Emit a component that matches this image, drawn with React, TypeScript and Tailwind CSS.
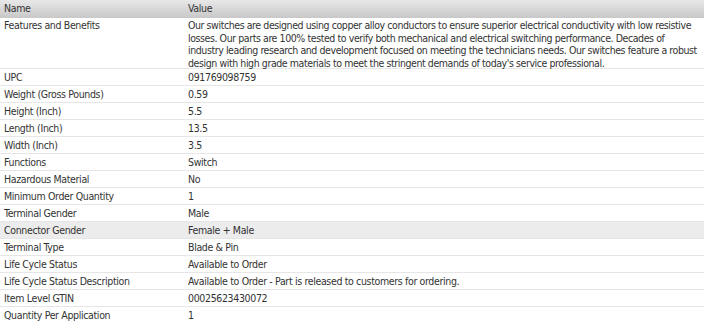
import React from "react";

const rows: [string, string][] = [
  ["UPC", "091769098759"],
  ["Weight (Gross Pounds)", "0.59"],
  ["Height (Inch)", "5.5"],
  ["Length (Inch)", "13.5"],
  ["Width (Inch)", "3.5"],
  ["Functions", "Switch"],
  ["Hazardous Material", "No"],
  ["Minimum Order Quantity", "1"],
  ["Terminal Gender", "Male"],
  ["Connector Gender", "Female + Male"],
  ["Terminal Type", "Blade & Pin"],
  ["Life Cycle Status", "Available to Order"],
  ["Life Cycle Status Description", "Available to Order - Part is released to customers for ordering."],
  ["Item Level GTIN", "00025623430072"],
  ["Quantity Per Application", "1"],
];

const features = [
  "Our switches are designed using copper alloy conductors to ensure superior electrical conductivity with low resistive",
  "losses. Our parts are 100% tested to verify both mechanical and electrical switching performance. Decades of",
  "industry leading research and development focused on meeting the technicians needs. Our switches feature a robust",
  "design with high grade materials to meet the stringent demands of today's service professional.",
];

export default function App() {
  return (
    <div className="w-[704px] bg-white text-[10.5px] tracking-[-0.35px] text-[#333] [font-family:'DejaVu_Sans_Condensed','DejaVu_Sans',sans-serif]">
      <div className="flex h-[18px] items-center bg-gradient-to-b from-[#e8e8e8] to-[#c8c8c8]">
        <div className="w-[184px] shrink-0 pl-[4px]">Name</div>
        <div className="min-w-0 flex-1 pl-[4px]">Value</div>
      </div>
      <div className="flex h-[51px] border-b border-[#e6e6e6] pt-[1px]">
        <div className="w-[184px] shrink-0 pl-[4px] leading-[13px]">Features and Benefits</div>
        <div className="min-w-0 flex-1 whitespace-nowrap pl-[4px] leading-[12.6px] tracking-[-0.42px]">
          {features.map((line) => (
            <div key={line}>{line}</div>
          ))}
        </div>
      </div>
      {rows.map(([name, value]) => (
        <div
          key={name}
          className={`flex h-[17px] items-center border-b border-[#e6e6e6] pt-[1px] ${
            name === "Connector Gender" ? "bg-[#ececec]" : "bg-white"
          }`}
        >
          <div className="w-[184px] shrink-0 pl-[4px]">{name}</div>
          <div className="min-w-0 flex-1 pl-[4px]">{value}</div>
        </div>
      ))}
    </div>
  );
}
